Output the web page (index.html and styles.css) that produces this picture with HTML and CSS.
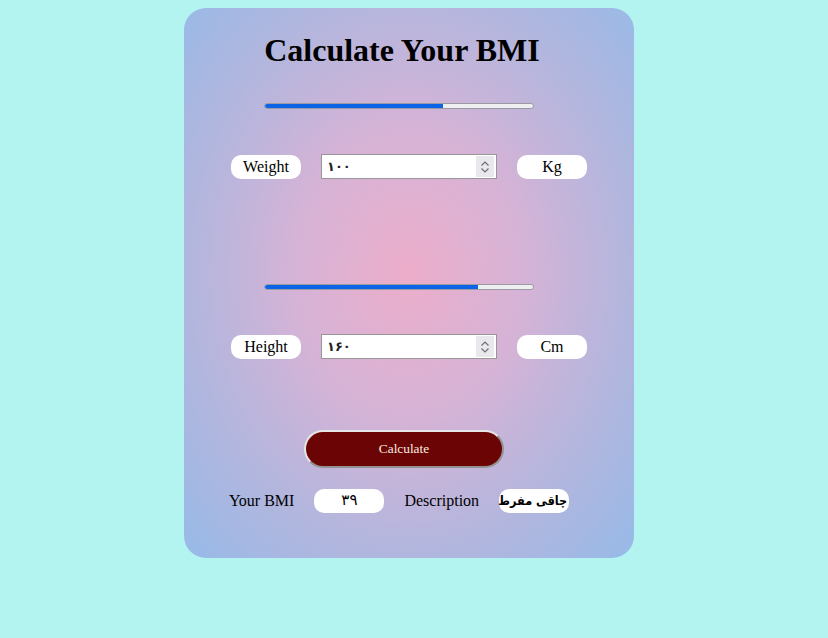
FILE: index.html
```html
<!DOCTYPE html>
<html lang="en">
<head>
<meta charset="utf-8">
<title>BMI</title>
<link rel="stylesheet" href="styles.css">
</head>
<body>
<div class="card">
  <h1 class="title">Calculate Your BMI</h1>

  <div class="bar"><div class="fill" style="width:66.7%"></div></div>
  <div class="row first">
    <span class="pill">Weight</span>
    <div class="num">
      <span class="digits">۱۰۰</span>
      <span class="spin"><svg width="12" height="16" viewBox="0 0 12 16"><path d="M2.5 6.5 L6 3 L9.5 6.5" fill="none" stroke="#6e6e73" stroke-width="1.2"/><path d="M2.5 9.5 L6 13 L9.5 9.5" fill="none" stroke="#6e6e73" stroke-width="1.2"/></svg></span>
    </div>
    <span class="pill">Kg</span>
  </div>

  <div class="bar second"><div class="fill" style="width:80%"></div></div>
  <div class="row">
    <span class="pill">Height</span>
    <div class="num">
      <span class="digits">۱۶۰</span>
      <span class="spin"><svg width="12" height="16" viewBox="0 0 12 16"><path d="M2.5 6.5 L6 3 L9.5 6.5" fill="none" stroke="#6e6e73" stroke-width="1.2"/><path d="M2.5 9.5 L6 13 L9.5 9.5" fill="none" stroke="#6e6e73" stroke-width="1.2"/></svg></span>
    </div>
    <span class="pill">Cm</span>
  </div>

  <button class="calc">Calculate</button>

  <div class="result">
    <span class="label">Your BMI</span>
    <span class="pill val">۳۹</span>
    <span class="label">Description</span>
    <span class="pill desc" dir="rtl">چاقی مفرط</span>
  </div>
</div>
</body>
</html>
```

FILE: styles.css
```css
html, body {
  margin: 0;
  padding: 0;
}
body {
  background: #b4f4f0;
  font-family: "Liberation Serif", "Times New Roman", serif;
  color: #000;
  height: 638px;
  overflow: hidden;
}
.card {
  box-sizing: border-box;
  width: 450px;
  height: 550px;
  margin: 8px 0 0 184px;
  border-radius: 22px;
  background: radial-gradient(ellipse at 50% 48%, #ecadca 0%, #d6b3d6 35%, #b1b6de 70%, #97bae8 100%);
  display: flex;
  flex-direction: column;
  align-items: center;
}
.title {
  margin: 24px 0 0 -14px;
  font-size: 32px;
  font-weight: bold;
  line-height: 37px;
}
.bar {
  box-sizing: border-box;
  width: 270px;
  height: 6px;
  margin: 34px 0 0 -20px;
  border: 1px solid #9a9aa4;
  border-radius: 3px;
  background: #efeff1;
  overflow: hidden;
  display: flex;
}
.bar.second {
  margin-top: 105px;
}
.fill {
  background: #0b63e5;
  margin: -1px 0 -1px -1px;
  border-radius: 3px 0 0 3px;
}
.row {
  display: flex;
  align-items: center;
  gap: 20px;
  margin-top: 44px;
  height: 25px;
}
.row.first {
  margin-top: 45px;
}
.pill {
  box-sizing: border-box;
  width: 70px;
  height: 24px;
  background: #fff;
  border-radius: 10px;
  font-size: 16px;
  line-height: 23px;
  text-align: center;
}
.num {
  box-sizing: border-box;
  width: 176px;
  height: 25px;
  background: #fff;
  border: 1px solid #979797;
  display: flex;
  align-items: center;
  justify-content: space-between;
  padding: 0 2px 0 5px;
}
.digits {
  font-family: "DejaVu Sans", sans-serif;
  font-size: 13px;
  font-weight: bold;
  color: #222;
}
.spin {
  width: 18px;
  height: 21px;
  background: #e9e9ed;
  display: flex;
  align-items: center;
  justify-content: center;
}
.calc {
  width: 200px;
  height: 38px;
  margin: 71px 0 0 -10px;
  background: #6b0505;
  color: #fbeee0;
  border: 2px outset #e6e6e6;
  border-radius: 20px;
  font-family: "Liberation Serif", "Times New Roman", serif;
  font-size: 13.33px;
  padding: 0;
}
.result {
  display: flex;
  align-items: center;
  gap: 20px;
  margin: 21px 0 0 -20px;
  height: 24px;
}
.label {
  font-size: 16px;
}
.val {
  font-family: "DejaVu Sans", sans-serif;
  font-size: 15px;
}
.desc {
  font-family: "DejaVu Sans Condensed", "DejaVu Sans", sans-serif;
  font-weight: bold;
  font-size: 12.5px;
  white-space: nowrap;
  text-align: right;
  padding-right: 2px;
  overflow: visible;
}
```
